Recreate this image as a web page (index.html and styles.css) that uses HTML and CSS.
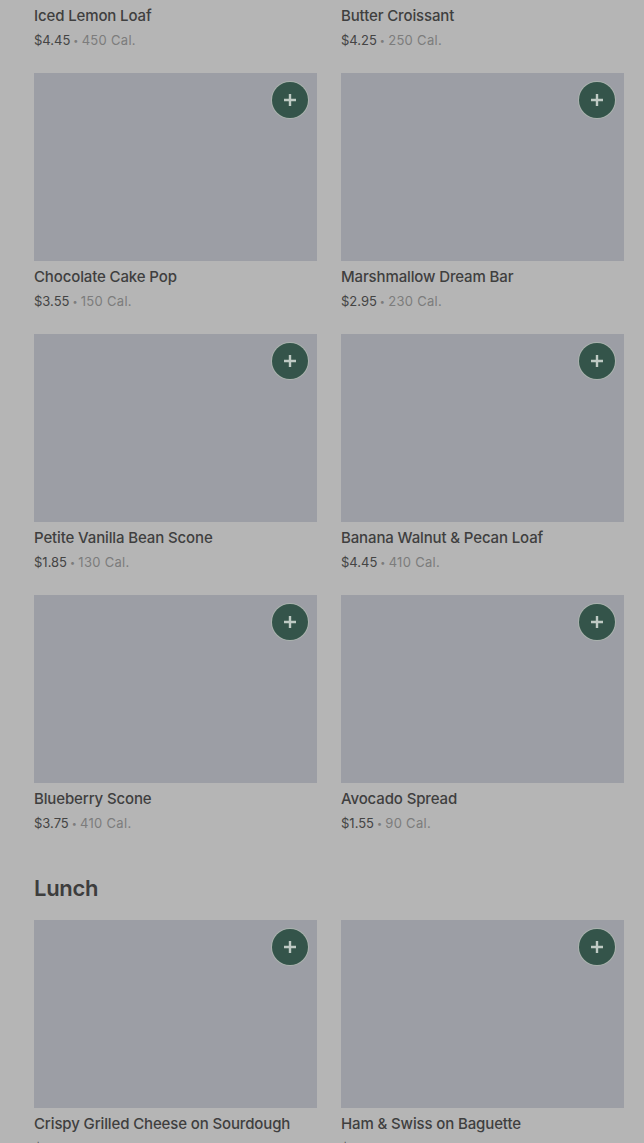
FILE: index.html
```html
<!DOCTYPE html>
<html lang="en">
<head>
<meta charset="UTF-8" />
<meta name="viewport" content="width=device-width, initial-scale=1" />
<title>Menu</title>
<link rel="stylesheet" href="styles.css">
</head>
<body>

<main class="menu">

  <section class="menu-section">
    <div class="menu-grid">
      <article class="item">
        <div class="item-photo">
          <button class="add-button" aria-label="Add"><svg viewBox="0 0 12 12" width="12" height="12"><path d="M6 0v12M0 6h12" /></svg></button>
        </div>
        <h3 class="item-name">Iced Lemon Loaf</h3>
        <p class="item-meta"><span class="price">$4.45</span> <span class="dot">•</span> 450 Cal.</p>
      </article>
      <article class="item">
        <div class="item-photo">
          <button class="add-button" aria-label="Add"><svg viewBox="0 0 12 12" width="12" height="12"><path d="M6 0v12M0 6h12" /></svg></button>
        </div>
        <h3 class="item-name">Butter Croissant</h3>
        <p class="item-meta"><span class="price">$4.25</span> <span class="dot">•</span> 250 Cal.</p>
      </article>
      <article class="item">
        <div class="item-photo">
          <button class="add-button" aria-label="Add"><svg viewBox="0 0 12 12" width="12" height="12"><path d="M6 0v12M0 6h12" /></svg></button>
        </div>
        <h3 class="item-name">Chocolate Cake Pop</h3>
        <p class="item-meta"><span class="price">$3.55</span> <span class="dot">•</span> 150 Cal.</p>
      </article>
      <article class="item">
        <div class="item-photo">
          <button class="add-button" aria-label="Add"><svg viewBox="0 0 12 12" width="12" height="12"><path d="M6 0v12M0 6h12" /></svg></button>
        </div>
        <h3 class="item-name">Marshmallow Dream Bar</h3>
        <p class="item-meta"><span class="price">$2.95</span> <span class="dot">•</span> 230 Cal.</p>
      </article>
      <article class="item">
        <div class="item-photo">
          <button class="add-button" aria-label="Add"><svg viewBox="0 0 12 12" width="12" height="12"><path d="M6 0v12M0 6h12" /></svg></button>
        </div>
        <h3 class="item-name">Petite Vanilla Bean Scone</h3>
        <p class="item-meta"><span class="price">$1.85</span> <span class="dot">•</span> 130 Cal.</p>
      </article>
      <article class="item">
        <div class="item-photo">
          <button class="add-button" aria-label="Add"><svg viewBox="0 0 12 12" width="12" height="12"><path d="M6 0v12M0 6h12" /></svg></button>
        </div>
        <h3 class="item-name">Banana Walnut &amp; Pecan Loaf</h3>
        <p class="item-meta"><span class="price">$4.45</span> <span class="dot">•</span> 410 Cal.</p>
      </article>
      <article class="item">
        <div class="item-photo">
          <button class="add-button" aria-label="Add"><svg viewBox="0 0 12 12" width="12" height="12"><path d="M6 0v12M0 6h12" /></svg></button>
        </div>
        <h3 class="item-name">Blueberry Scone</h3>
        <p class="item-meta"><span class="price">$3.75</span> <span class="dot">•</span> 410 Cal.</p>
      </article>
      <article class="item">
        <div class="item-photo">
          <button class="add-button" aria-label="Add"><svg viewBox="0 0 12 12" width="12" height="12"><path d="M6 0v12M0 6h12" /></svg></button>
        </div>
        <h3 class="item-name">Avocado Spread</h3>
        <p class="item-meta"><span class="price">$1.55</span> <span class="dot">•</span> 90 Cal.</p>
      </article>
    </div>
  </section>

  <section class="menu-section">
    <h2 class="section-title">Lunch</h2>
    <div class="menu-grid">
      <article class="item">
        <div class="item-photo">
          <button class="add-button" aria-label="Add"><svg viewBox="0 0 12 12" width="12" height="12"><path d="M6 0v12M0 6h12" /></svg></button>
        </div>
        <h3 class="item-name">Crispy Grilled Cheese on Sourdough</h3>
        <p class="item-meta"><span class="price">$7.95</span> <span class="dot">•</span> 520 Cal.</p>
      </article>
      <article class="item">
        <div class="item-photo">
          <button class="add-button" aria-label="Add"><svg viewBox="0 0 12 12" width="12" height="12"><path d="M6 0v12M0 6h12" /></svg></button>
        </div>
        <h3 class="item-name">Ham &amp; Swiss on Baguette</h3>
        <p class="item-meta"><span class="price">$7.95</span> <span class="dot">•</span> 500 Cal.</p>
      </article>
    </div>
  </section>

</main>

</body>
</html>
```

FILE: styles.css
```css
/* --- Reset & basics --- */
* {
  margin: 0; padding: 0; box-sizing: border-box;
}
html, body {
  height: 100%;
  overflow: hidden;
}
body {
  background: #b5b5b5;
  font-family: Inter, 'Liberation Sans', sans-serif;
  color: #3d3d3d;
}

/* --- Page is scrolled, so the first row of photos sits above the fold --- */
.menu {
  margin-top: -188px;
  padding: 0 20px 0 34px;
}
.menu-section + .menu-section {
  margin-top: 39px;
}
.section-title {
  padding-top: 1px;
  font-size: 22px;
  line-height: 31px;
  font-weight: 600;
  letter-spacing: -0.3px;
  margin-bottom: 16px;
  color: #3d3d3d;
}

/* --- Item grid --- */
.menu-grid {
  display: grid;
  grid-template-columns: 283px 283px;
  column-gap: 24px;
  row-gap: 23px;
}
.item-photo {
  display: flex;
  justify-content: flex-end;
  align-items: flex-start;
  height: 188px;
  padding: 9px 9px 0 0;
  background: #9c9ea5;
}
.add-button {
  display: flex;
  align-items: center;
  justify-content: center;
  width: 36px;
  height: 36px;
  border: 0;
  border-radius: 50%;
  background: #34544a;
  box-shadow: 0 0 0 1px #aab3ae;
}
.add-button svg {
  fill: none;
  stroke: #bfcac4;
  stroke-width: 2.4;
}
.item-name {
  padding-top: 1px;
  margin-top: 3px;
  font-size: 15px;
  line-height: 23px;
  font-weight: 500;
  letter-spacing: -0.13px;
  color: #3f3f3f;
}
.item-meta {
  margin-top: 3px;
  font-size: 13px;
  line-height: 20px;
  letter-spacing: 0.3px;
  color: #7c7c7c;
}
.price {
  letter-spacing: 0;
  color: #444;
}
.dot {
  margin: 0 -1px;
  font-size: 9px;
  line-height: 0;
  vertical-align: 1px;
}
```
